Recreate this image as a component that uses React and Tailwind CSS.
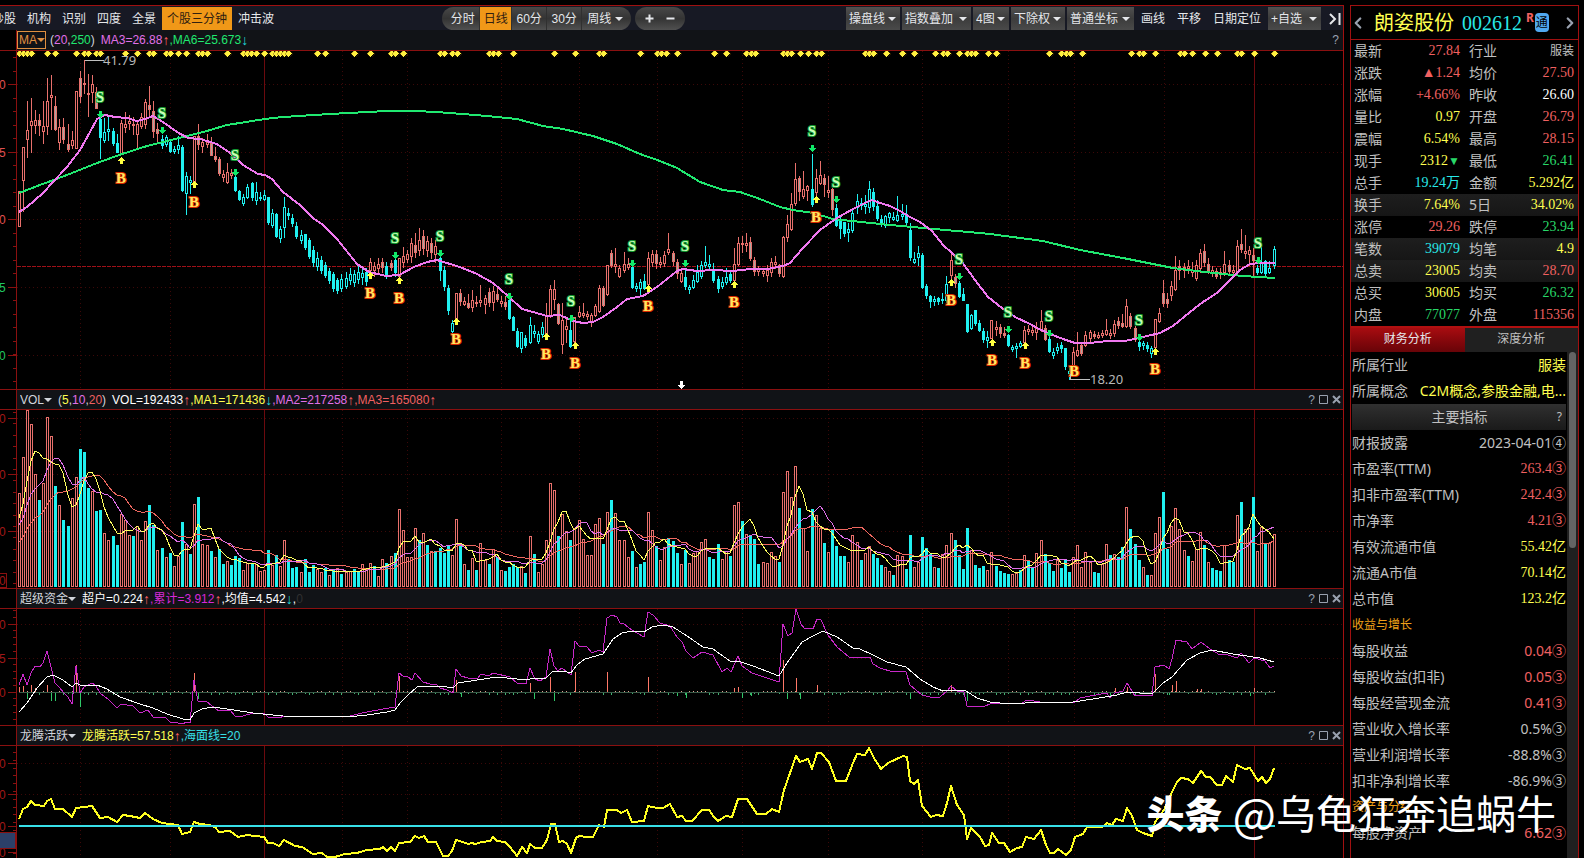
import React, { useState } from "react";
import { ChevronLeft, ChevronRight } from "lucide-react";

/* ---------- chart data ---------- */

// r = up, g = up with grey body, C = down, c = down with hollow body
// high, body top, body bottom, low
const CANDLES = `
r191,191,226,226 r147,147,180,211 r101,130,139,157 r98,121,125,152 r110,120,125,133 g114,120,125,135 r101,126,131,143 r78,101,126,134
r75,95,97,129 g96,106,129,130 r119,127,142,149 g118,127,139,143 g124,144,149,151 r131,140,145,148 r91,91,148,148 g71,78,96,102
r60,83,84,93 r74,93,94,116 r75,84,92,102 g87,92,108,108 C117,119,137,158 c118,132,140,142 c117,129,131,140 C128,131,143,145
C134,143,152,152 r120,123,153,153 r112,124,127,132 r115,121,123,129 r117,124,125,134 r122,124,134,148 r113,117,126,128 r99,102,124,128
g86,105,109,115 g101,111,131,137 g123,129,133,143 C135,139,145,148 c135,137,144,146 C140,142,151,152 c146,149,151,153 c136,145,149,153
C145,147,190,191 c172,176,193,214 c176,180,182,193 r136,136,181,181 g124,136,144,149 r138,142,146,152 r134,142,144,147 g137,143,155,155
g147,156,159,161 g157,159,173,175 r170,174,177,181 r163,172,182,183 r169,173,175,178 C176,177,190,191 C190,191,199,200 c194,197,203,205
c184,187,197,198 C182,183,197,200 c182,192,200,204 c192,197,198,200 c190,195,199,200 C197,197,222,224 c209,213,225,227 C213,214,236,237
c226,229,238,242 c197,207,227,237 C208,213,215,219 C214,218,223,226 C222,226,236,238 c230,235,240,243 C234,234,247,249 C238,240,256,258
C246,250,262,266 c252,258,266,270 C256,260,270,273 C262,265,275,277 C268,271,280,283 C272,274,288,291 C278,280,290,293 c274,279,288,291
c272,278,286,288 c268,274,280,284 c270,274,282,286 c266,272,279,283 c268,273,277,284 C268,272,281,285 r258,262,270,271 r262,266,270,276
r258,264,268,274 g258,262,267,272 C262,266,275,278 g260,263,267,270 C258,260,272,276 r258,258,276,276 r247,256,262,267 r250,254,259,262
r238,243,256,262 g233,245,252,257 r228,240,250,255 g230,236,248,254 r236,241,250,256 g238,243,252,258 r240,246,254,262 C252,258,270,280
C266,270,286,290 C285,288,310,314 c320,323,331,333 r293,293,318,318 g289,293,301,305 r297,301,304,305 g294,303,307,308 r290,300,307,311
r296,302,303,306 r285,300,302,306 r295,298,304,313 g288,292,302,306 r286,291,302,310 g288,294,299,301 r296,301,303,306 g296,302,306,309
C300,300,318,319 C316,317,330,330 C328,331,346,347 c332,332,348,352 C335,338,345,347 c317,325,342,343 c325,331,333,337 c331,334,341,343
c322,327,334,337 r303,316,333,333 r285,289,316,317 r280,289,299,309 g303,304,323,324 r303,320,344,353 r318,326,329,342 C321,330,346,347
r317,317,341,342 r306,312,316,317 r303,313,315,317 r311,314,316,319 r313,315,321,326 r304,306,315,316 r285,288,311,312 g286,288,305,306
r265,265,294,295 g250,253,265,267 r248,264,266,272 r265,268,276,277 r252,264,270,272 r258,264,267,269 C265,267,287,288 c283,286,288,291
c279,282,288,294 C274,281,288,289 r252,258,284,285 r250,254,262,266 g250,254,263,268 r257,262,264,267 r251,255,263,266 r233,249,252,254
g251,253,261,265 g259,262,273,278 r271,273,281,282 C268,277,286,289 c285,287,289,293 c275,280,287,288 c265,272,281,282 c261,265,276,278
c246,262,265,267 c255,264,266,270 C263,269,280,282 C276,279,288,292 c277,282,286,288 c268,277,282,284 C271,274,280,282 r248,264,280,281
r237,243,264,265 r236,243,244,252 r233,243,245,251 g237,242,258,260 g257,260,271,275 r266,269,271,275 r268,271,273,276 r265,270,275,281
r258,262,272,276 r256,262,264,268 g264,265,273,276 r236,237,276,277 r215,224,237,241 r193,204,229,230 r163,179,203,205 g176,178,191,200
r171,189,196,198 r185,186,190,200 C154,189,204,206 r169,178,192,196 r161,175,183,184 g174,178,184,196 r176,190,192,197 g188,189,209,215
C204,208,225,226 C217,220,228,238 C222,222,233,236 c223,229,232,241 c210,213,230,232 c194,201,207,213 c198,203,205,209 c195,204,206,213
c181,189,207,212 C188,192,206,210 C200,206,218,220 C215,219,223,226 c215,216,225,227 c212,213,217,222 c212,217,219,220 c196,215,220,221
c204,214,216,219 C205,214,222,224 C223,230,257,260 c252,259,262,263 c246,253,257,265 C253,255,287,288 C284,286,295,298 C295,296,301,307
c296,299,301,305 C297,298,301,304 c293,299,300,303 c276,284,300,302 r253,260,275,278 g274,277,283,287 C281,283,296,297 C288,294,300,300
C304,304,331,332 c314,315,328,329 C310,310,323,325 C320,323,330,331 C328,331,339,342 c331,337,340,347 r320,320,338,338 r321,327,329,335
g324,327,333,337 g327,333,335,337 C334,335,345,346 c345,347,349,351 c343,346,348,357 c341,343,346,347 r326,330,342,343 r325,329,331,334
r326,330,332,335 r322,328,332,339 r310,321,329,331 g325,328,339,340 C337,339,351,352 c348,352,355,358 c343,347,350,353 C342,345,348,352
C348,348,366,369 c367,371,373,379 r347,352,365,366 r332,350,355,356 g342,345,353,355 r331,335,345,346 r330,332,338,341 g331,334,336,338
r332,335,337,338 r330,333,335,337 r319,330,334,335 r329,333,335,338 r320,324,333,336 g317,321,325,328 g314,323,326,327 r299,306,326,327
g313,316,326,328 g326,328,339,341 C339,342,346,350 c341,343,345,349 C342,345,348,351 c346,348,353,357 r319,319,347,347 r308,313,321,322
g280,293,303,306 g293,299,303,307 r281,286,295,300 r256,270,289,290 g260,266,270,279 r263,267,270,277 r260,266,268,273 r262,270,272,276
r260,265,278,280 r249,253,268,272 g244,251,262,266 g258,264,270,273 r266,270,272,276 g268,271,276,278 r268,272,274,278 r251,264,272,275
g260,265,271,274 r265,270,272,274 r240,246,271,273 g229,244,249,252 r235,251,253,258 r246,250,254,265 g248,255,260,275 C265,268,272,274
c247,263,272,273 C260,261,273,275 c261,268,272,273 c246,249,265,268`
  .trim()
  .split(/\s+/)
  .map((s) => [s[0], ...s.slice(1).split(",").map(Number)]);

// negative = down day
const VOLUMES = [
  283, 391, 532, 490, 340, -260, 312, 511, 454, -302, 247, -200, -182, 268, 329, -413, -404, -296, 287, -227, -230, 163, 142, -152, -125,
  220, 200, 157, -152, 184, 142, 199, -247, -187, 110, -116, 91, -101, 62, 92, -194, 128, -98, 250, -271, 128, 125, -107, 91, -113, -68,
  77, -65, -92, -86, 50, 71, -68, 68, 47, 50, -110, 65, -95, 62, 142, -83, -56, -59, 44, -83, -44, -65, 53, 44, -56, 35, -50, 58, -38,
  44, 47, -53, -44, 68, 56, 71, -62, 32, 83, -71, 92, -101, 235, 172, 89, 89, 178, -140, 163, -125, 107, -107, -116, -101, -125, 97, 205,
  -133, 70, -52, 88, -52, 133, 82, -70, 115, -91, 52, -49, -61, -70, -61, 64, -43, 154, -100, 46, 70, 142, 313, 292, -152, 220, 169,
  -142, 178, 202, 145, 97, 97, 190, 208, -130, 226, -262, 223, 142, 142, 91, -109, 61, -70, -76, 226, 172, -124, 82, 121, -148, -139,
  -103, 70, -112, 73, 103, 109, 136, 145, -91, -85, -130, 85, 109, -94, 247, 256, -199, 160, -157, -145, -70, 76, 73, 106, 94, -76, 286,
  349, 271, 364, -238, 178, 109, -235, 217, 178, -133, 106, -175, -124, -94, -94, 76, 157, 136, -82, 103, 124, -100, -88, -67, 61, 49,
  -37, 97, 94, -55, -157, 61, 76, -151, -118, -100, 61, -58, 100, 127, 163, -142, -97, -55, -178, 112, -67, -58, -64, 52, 106, -64, -49,
  -43, -40, 40, 43, -52, 97, -79, -58, 103, 142, -100, -73, -49, 82, -58, -82, -46, 91, 127, 61, 106, 76, -46, -43, 70, 130, -97, 100,
  -91, -121, 241, -175, -130, -82, 61, -37, 37, 163, 211, -286, -115, 184, 238, 175, 112, -94, 79, 115, 166, -127, 76, -58, -52, -49,
  127, -82, -76, 217, -256, 175, 178, -271, 109, 181, -130, 133, 160,
];

// volumes of the 19 days before the first visible one
const VOL_HISTORY = [85, 85, 85, 85, 85, 85, 85, 85, 85, 85, 162, 162, 162, 162, 162, 189, 189, 189, 189];

const MA_SHORT =
  "19,212 27,207 43,193 53,182 67,167 80,150 90,132 97,119 105,115 115,117 127,118 137,121 145,119 153,116 163,122 177,132 188,138 200,139 217,144 230,153 243,165 258,174 265,175 272,179 283,192 300,205 313,218 323,225 337,239 349,254 357,264 369,272 386,276 399,275 414,267 427,262 437,260 450,264 460,267 477,274 493,283 508,296 522,309 533,312 547,316 560,315 573,321 583,323 593,322 603,317 617,307 627,299 643,296 657,287 677,271 683,269 697,271 713,270 733,271 750,269 767,269 783,266 790,263 803,248 820,230 837,218 853,209 867,202 872,200 877,202 890,206 900,211 910,217 920,222 932,231 943,245 952,253 962,262 975,280 988,297 1002,308 1015,317 1030,324 1037,328 1050,334 1063,339 1075,343 1090,343 1107,341 1125,341 1143,337 1160,333 1173,326 1190,312 1203,302 1217,293 1230,280 1240,270 1250,264 1260,263 1275,263";
const MA_LONG =
  "19,193 40,185 67,175 97,163 122,154 147,146 167,141 187,136 207,131 227,125 265,119 283,117 330,114 387,111 417,111 435,112 450,113 487,116 517,119 543,126 563,129 593,136 617,144 640,154 660,161 677,168 700,182 723,190 740,192 760,199 780,207 793,210 813,213 833,219 890,225 923,228 957,231 990,234 1043,241 1080,250 1123,258 1173,268 1197,271 1223,274 1243,276 1275,278";
const FUND_SUM =
  "19,685 23,674 27,685 31,673 35,666 40,667 43,663 47,651 51,667 55,683 59,687 64,693 68,697 72,704 76,666 80,693 84,687 92,683 96,686 100,693 109,700 117,708 121,704 133,706 140,713 148,710 153,717 165,717 170,722 178,723 182,724 187,722 190,723 194,680 198,701 207,702 219,711 230,710 235,716 243,716 253,713 265,714 268,717 278,718 285,716 327,717 350,716 362,713 383,709 395,707 399,673 403,676 408,677 412,680 415,673 423,682 430,684 437,685 440,688 447,690 453,693 456,669 461,676 468,678 477,679 481,674 489,676 493,673 510,677 517,683 526,684 530,668 535,679 540,681 546,677 550,649 554,666 558,671 562,668 571,675 575,641 579,646 587,647 592,653 599,650 603,652 607,618 612,615 617,617 620,623 624,624 632,630 644,637 648,612 653,615 660,623 670,626 677,637 682,642 686,651 693,658 702,652 713,655 722,672 727,668 731,672 738,656 742,666 752,673 770,679 779,682 783,624 788,636 792,633 796,609 801,624 804,628 813,629 817,619 821,620 828,635 837,647 849,657 870,657 873,664 880,668 893,672 899,671 906,672 910,685 922,695 930,697 940,697 947,691 951,686 957,691 964,692 967,706 983,707 992,703 1022,703 1027,700 1047,703 1060,702 1075,702 1080,698 1090,696 1107,693 1110,698 1115,693 1123,691 1127,683 1135,696 1143,695 1152,696 1155,667 1164,665 1169,669 1172,659 1176,640 1187,642 1192,649 1201,642 1210,649 1220,655 1225,654 1237,658 1241,653 1249,663 1254,658 1265,661 1270,668 1274,666";
const FUND_AVG =
  "19,712 27,703 37,688 47,677 53,675 63,680 72,687 76,683 82,686 97,685 107,689 120,697 140,704 153,708 167,714 183,719 190,720 194,713 202,709 213,707 227,709 253,713 283,716 347,717 367,715 387,712 395,710 400,703 408,695 417,687 427,686 440,686 453,688 458,683 477,680 497,677 517,679 527,680 533,678 546,678 552,672 563,671 571,673 577,665 585,659 603,654 613,639 622,633 632,631 644,632 652,627 663,625 673,627 687,636 703,647 713,649 730,661 738,661 753,666 779,676 787,663 802,642 813,636 823,631 837,637 853,648 860,649 873,655 887,662 906,667 920,679 933,687 943,691 957,690 966,691 977,698 990,702 1010,704 1040,702 1073,702 1093,699 1117,695 1127,692 1152,694 1163,683 1172,677 1187,660 1200,653 1212,650 1233,654 1260,658 1274,662";
const ACTIVE =
  "19,819 23,809 27,807 31,801 35,805 44,806 47,801 51,799 55,809 63,809 72,817 76,808 84,807 92,806 100,818 108,817 117,822 123,815 130,816 140,818 145,813 153,819 162,823 170,824 178,825 182,834 190,832 194,822 200,824 209,825 215,827 219,832 230,831 238,837 247,835 264,837 268,843 273,843 279,846 284,840 295,846 302,847 313,854 322,853 327,857 335,857 345,854 357,853 367,850 380,849 383,847 387,851 391,847 395,851 399,843 410,842 415,836 419,838 424,836 428,842 436,842 443,856 448,856 452,851 456,840 463,842 468,844 472,843 475,844 482,842 490,841 493,837 497,841 505,842 510,847 517,856 522,847 527,853 530,844 535,848 542,848 547,840 551,824 555,824 559,842 563,841 567,844 571,853 576,838 579,836 587,837 593,837 599,825 604,827 607,810 617,810 621,813 627,810 632,822 644,821 648,806 657,808 663,808 670,804 677,817 682,816 686,821 692,821 702,810 709,810 714,817 718,821 726,816 732,817 738,799 747,799 757,814 766,814 772,809 779,812 784,790 796,756 800,762 808,759 812,769 817,753 821,753 829,762 836,781 846,781 853,763 857,754 865,755 869,748 874,758 881,769 888,763 903,756 907,757 910,781 914,784 918,780 922,806 931,817 936,815 943,816 947,803 951,786 957,805 964,815 967,839 971,828 980,837 985,846 989,845 992,833 999,843 1004,843 1010,852 1017,848 1022,847 1026,837 1034,839 1041,830 1046,845 1050,853 1054,853 1058,849 1066,855 1071,850 1075,837 1083,834 1087,827 1102,827 1107,823 1112,825 1116,819 1123,821 1127,808 1132,816 1137,830 1143,833 1152,836 1155,822 1164,810 1172,792 1177,782 1181,778 1188,779 1193,783 1201,771 1206,777 1210,777 1217,785 1222,785 1226,776 1233,782 1237,765 1245,769 1250,768 1258,781 1262,777 1266,783 1270,779 1274,768";

const EVENTS = [
  19, 23, 27, 31, 47, 55, 76, 84, 88, 96, 100, 125, 137, 149, 153, 166, 170, 178, 186, 198, 202, 207, 227, 243, 247, 251, 256, 264, 272,
  276, 280, 284, 288, 317, 325, 354, 370, 391, 395, 403, 440, 444, 452, 457, 489, 493, 498, 513, 554, 575, 599, 603, 640, 657, 661, 666,
  677, 714, 726, 746, 751, 755, 783, 787, 791, 800, 808, 816, 821, 865, 869, 873, 886, 902, 914, 935, 943, 947, 959, 967, 971, 975, 988,
  996, 1049, 1061, 1066, 1070, 1082, 1131, 1139, 1143, 1155, 1180, 1184, 1192, 1205, 1217, 1237, 1241, 1254, 1274,
];

const SELLS = [
  [100, 97], [162, 113], [235, 155], [395, 238], [440, 236], [509, 279], [571, 301], [632, 246],
  [685, 246], [812, 131], [836, 182], [959, 259], [1008, 312], [1049, 316], [1139, 320], [1258, 243],
];
const BUYS = [
  [121, 178], [194, 202], [370, 293], [399, 298], [456, 339], [546, 354], [575, 363], [648, 306],
  [734, 302], [816, 217], [951, 300], [992, 360], [1025, 363], [1074, 371], [1155, 369],
];

const FUND_IN = [
  [19, 5], [23, 6], [31, 7], [35, 4], [47, 7], [76, 27], [194, 19], [399, 16], [456, 12], [530, 9], [550, 15], [575, 20], [607, 20],
  [648, 15], [734, 4], [738, 5], [783, 32], [796, 14], [817, 7], [951, 7], [1115, 4], [1127, 5], [1155, 18], [1172, 7], [1176, 11],
  [1197, 3], [1201, 3], [1254, 4],
];
const FUND_OUT = [
  [27, 6], [51, 8], [55, 8], [72, 4], [80, 14], [198, 6], [461, 4], [534, 6], [554, 8], [677, 3], [686, 5], [742, 5], [751, 3],
  [787, 6], [800, 6], [910, 6], [922, 3], [967, 8], [1110, 4], [1169, 2], [1250, 3],
];

const MONTHS = [80, 170, 342, 407, 501, 579, 657, 742, 828, 922, 1008, 1074, 1164];
const YEARS = [264, 1254];

const barX = (i) => 19 + Math.floor(i * 4.088);

const average = (n) => {
  const all = [...VOL_HISTORY, ...VOLUMES.map(Math.abs)];
  return VOLUMES.map((_, i) => {
    const end = i + VOL_HISTORY.length + 1;
    const sum = all.slice(end - n, end).reduce((a, b) => a + b, 0);
    return `${barX(i)},${Math.round(587 - sum / n / 3)}`;
  }).join(" ");
};

/* ---------- small parts ---------- */

const Caret = ({ className = "" }) => (
  <svg viewBox="0 0 8 4" className={`pointer-events-none h-1 w-2 ${className}`}>
    <path d="M0 0h8L4 4z" fill="currentColor" />
  </svg>
);

const Dropdown = ({ label, className = "", caret = "right-1" }) => (
  <label className={`relative flex items-center ${className}`}>
    <select aria-label={label} className="h-full w-full appearance-none bg-transparent outline-none">
      <option>{label}</option>
    </select>
    <Caret className={`absolute ${caret}`} />
  </label>
);

const WindowButtons = () => (
  <div className="ml-auto flex items-center gap-1 pr-0.5 text-xs text-gray-400">
    <button>?</button>
    <button aria-label="最大化">
      <svg viewBox="0 0 9 9" className="size-[9px]">
        <path d="M.5 .5h8v8h-8z" fill="none" stroke="currentColor" />
      </svg>
    </button>
    <button aria-label="关闭">
      <svg viewBox="0 0 9 9" className="size-[9px]">
        <path d="M1 1l7 7M8 1l-7 7" stroke="currentColor" strokeWidth="2" />
      </svg>
    </button>
  </div>
);

const Up = () => <span className="text-sm leading-none text-[#ff6060]">↑</span>;
const Down = () => <span className="text-sm leading-none text-[#20d8d8]">↓</span>;

const TitleBar = ({ name, width, children }) => (
  <div className="flex h-[21px] shrink-0 border-y border-[#8a1010]">
    <div className="w-[17px] shrink-0 border-r border-[#8a1010]" />
    <div className="flex flex-1 items-center bg-[#111317] pl-[3px] text-xs whitespace-nowrap">
      <Dropdown label={name} className={`mr-1.5 h-full text-gray-300 ${width}`} caret="right-0" />
      {children}
      <WindowButtons />
    </div>
  </div>
);

const Axis = ({ top, height, labels, step, from, children }) => {
  const ticks = [];
  for (let y = from; y < top + height; y += step) ticks.push(Math.round(y));
  return (
    <svg
      viewBox={`0 ${top} 16 ${height}`}
      preserveAspectRatio="none"
      className="h-full w-[17px] shrink-0 border-r border-[#8a1010]"
      shapeRendering="crispEdges"
    >
      {ticks.map((y) => (
        <rect key={y} x="13" y={y} width="3" height="1" fill="#8a1010" />
      ))}
      {labels.map(([text, y, color]) => (
        <g key={y}>
          <rect x="8" y={y} width="8" height="1" fill="#8a1010" />
          <text x="-1" y={y + 5} fontSize="12" fill={color}>
            {text}
          </text>
        </g>
      ))}
      {children}
    </svg>
  );
};

const Plot = ({ top, height, rows, children, label }) => (
  <svg
    viewBox={`17 ${top} 1326 ${height}`}
    preserveAspectRatio="none"
    className="h-full min-w-0 flex-1"
    shapeRendering="crispEdges"
    role="img"
    aria-label={label}
  >
    <g stroke="#3c0808" strokeDasharray="1 3">
      {rows.map((y) => (
        <line key={y} x1="17" x2="1343" y1={y + 0.5} y2={y + 0.5} />
      ))}
      {MONTHS.map((x) => (
        <line key={x} x1={x + 0.5} x2={x + 0.5} y1={top} y2={top + height} />
      ))}
    </g>
    {YEARS.map((x) => (
      <rect key={x} x={x} y={top} width="1" height={height} fill="#6c0a0e" />
    ))}
    {children}
  </svg>
);

const Line = ({ points, color, width = 1 }) => (
  <polyline points={points} fill="none" stroke={color} strokeWidth={width} strokeLinejoin="round" />
);

/* ---------- charts ---------- */

const PriceChart = () => (
  <div className="flex min-h-0 flex-[338]">
    <Axis
      top={51}
      height={338}
      from={57}
      step={13.5}
      labels={[
        ["0", 84, "#e05050"],
        ["5", 152, "#e05050"],
        ["0", 219, "#e05050"],
        ["5", 287, "#20c860"],
        ["0", 355, "#20c860"],
      ]}
    />
    <Plot top={51} height={338} rows={[84, 152, 219, 287, 355]} label="日线">
      <line x1="17" x2="1343" y1="266.5" y2="266.5" stroke="#a01018" strokeDasharray="4 1" />
      {CANDLES.map(([type, high, top, bottom, low], i) => {
        const x = barX(i);
        const color = type === "r" || type === "g" ? "#e8706c" : "#20f0f0";
        const inner = type === "g" ? "#a8a8a0" : "#000";
        return (
          <g key={i}>
            <rect x={x} y={high} width="1" height={low - high + 1} fill={color} />
            <rect x={x - 1} y={top} width="3" height={bottom - top + 1} fill={color} />
            {type !== "C" && bottom - top > 1 && (
              <rect x={x} y={top + 1} width="1" height={bottom - top - 1} fill={inner} />
            )}
          </g>
        );
      })}
      <Line points={MA_LONG} color="#20e870" width={2} />
      <Line points={MA_SHORT} color="#f078f0" width={2} />
      {EVENTS.map((x) => (
        <path key={x} d={`M${x - 3} 53.5l3.5-3.5 3.5 3.5-3.5 3.5z`} fill="#fff040" stroke="#604000" strokeWidth=".4" />
      ))}
      <g fontFamily="Liberation Serif" fontSize="15" fontWeight="bold" textAnchor="middle" paintOrder="stroke" strokeWidth="2">
        {SELLS.map(([x, y]) => (
          <g key={x}>
            <text x={x} y={y + 5} fill="#c8ffb8" stroke="#109830">
              S
            </text>
            <path d={`M${x - 1} ${y + 14}h3v3h2l-3.500 4-3.500-4h2z`} fill="#10e868" />
          </g>
        ))}
        {BUYS.map(([x, y]) => (
          <g key={x}>
            {x !== 1074 && <path d={`M${x - 1} ${y - 14}h3v-3h2l-3.500-4-3.500 4h2z`} fill="#ffff40" />}
            <text x={x} y={y + 5} fill="#ffe860" stroke="#d82800">
              B
            </text>
          </g>
        ))}
      </g>
      <path d="M680 381h3v4h2l-3.500 4-3.500-4h2z" fill="#fff" />
      <g fill="none" stroke="#c0c0c0">
        <path d="M84.5 60.500H104" />
        <path d="M1070.500 374v5.500H1090" />
      </g>
      <g fill="#b8b8b8" fontSize="13" fontFamily="Noto Sans">
        <text x="103" y="65">
          41.79
        </text>
        <text x="1090" y="384">
          18.20
        </text>
      </g>
    </Plot>
  </div>
);

const VolumeChart = () => (
  <div className="flex min-h-0 flex-[178]">
    <Axis
      top={410}
      height={178}
      from={412}
      step={11.4}
      labels={[
        ["0", 418, "#a01818"],
        ["0", 474, "#a01818"],
        ["0", 531, "#a01818"],
      ]}
    >
      <path d="M-1 573.500h7.500v14h-8" fill="none" stroke="#8a1010" />
      <text x="-1" y="585" fontSize="12" fill="#a01818">
        0
      </text>
    </Axis>
    <Plot top={410} height={178} rows={[418, 474, 531]} label="VOL">
      {VOLUMES.map((v, i) => {
        const h = Math.round(Math.abs(v) / 3);
        const x = barX(i);
        return (
          <g key={i}>
            <rect x={x - 1} y={587 - h} width="3" height={h} fill={v < 0 ? "#20f0f0" : "#e8706c"} />
            {v > 0 && <rect x={x} y={588 - h} width="1" height={h - 2} fill="#000" />}
          </g>
        );
      })}
      <Line points={average(20)} color="#f06860" />
      <Line points={average(10)} color="#e070e8" />
      <Line points={average(5)} color="#ffff60" />
    </Plot>
  </div>
);

const FundChart = () => (
  <div className="flex min-h-0 flex-[116]">
    <Axis
      top={609}
      height={116}
      from={610}
      step={6.8}
      labels={[
        ["0", 624, "#a01818"],
        ["5", 658, "#a01818"],
        ["0", 692, "#a01818"],
      ]}
    />
    <Plot top={609} height={116} rows={[624, 658]} label="超级资金">
      <rect x="19" y="692" width="1256" height="1" fill="#3a5a48" />
      {VOLUMES.map((v, i) =>
        v < 0 ? (
          <rect key={i} x={barX(i)} y="693" width="1" height={1 + (i % 2)} fill="#40b070" />
        ) : (
          <rect key={i} x={barX(i)} y="691" width="1" height="1" fill="#e0a090" />
        )
      )}
      {FUND_IN.map(([x, h]) => (
        <rect key={x} x={x} y={692 - h} width="1" height={h} fill="#ff7868" />
      ))}
      {FUND_OUT.map(([x, h]) => (
        <rect key={x} x={x} y="693" width="1" height={h} fill="#30c868" />
      ))}
      <Line points={FUND_SUM} color="#c828c8" />
      <Line points={FUND_AVG} color="#fff" />
    </Plot>
  </div>
);

const ActiveChart = () => (
  <div className="flex min-h-0 flex-[112]">
    <Axis
      top={746}
      height={112}
      from={752}
      step={7.8}
      labels={[
        ["0", 763, "#a01818"],
        ["0", 794, "#a01818"],
        ["0", 826, "#a01818"],
        ["0", 852, "#a01818"],
      ]}
    >
      <rect x="-1" y="832" width="16" height="16" fill="#2c4068" stroke="#8a1010" />
    </Axis>
    <Plot top={746} height={112} rows={[763, 794]} label="龙腾活跃">
      <Line points={ACTIVE} color="#ffff20" width={2} />
      <rect x="19" y="825" width="1256" height="2" fill="#38e0e8" />
    </Plot>
  </div>
);

/* ---------- toolbar ---------- */

const LINKS = ["炒股", "机构", "识别", "四度", "全景", "个股三分钟", "冲击波"];
const BOX = "h-[23px] bg-gradient-to-b from-[#505050] via-[#3c3c3c] to-[#4a4a4a] pl-[3px]";

const Toolbar = () => {
  const [period, setPeriod] = useState("日线");
  return (
    <div className="grid h-6 shrink-0 grid-cols-[33%_1fr_auto] items-end bg-[#171924] text-xs whitespace-nowrap text-gray-200">
      <nav className="flex overflow-hidden">
        <div className="-ml-[13px] flex gap-px">
          {LINKS.map((name) => (
            <button
              key={name}
              className={`h-[23px] px-[5px] ${name === "个股三分钟" ? "bg-[#f09818] text-[#302010]" : ""}`}
            >
              {name}
            </button>
          ))}
        </div>
      </nav>

      <div className="flex gap-1">
        <div className="-ml-px flex h-[23px] w-[189px] overflow-hidden rounded-full bg-gradient-to-b from-[#484848] via-[#343434] to-[#505050]">
          {["分时", "日线", "60分", "30分"].map((name) => (
            <button
              key={name}
              onClick={() => setPeriod(name)}
              className={`border-r border-[#303030] ${name === "分时" ? "w-[38px] pl-1" : name === "日线" ? "w-8" : "w-[35px]"} ${
                period === name ? "bg-[#f09818] text-[#302010]" : ""
              }`}
            >
              {name}
            </button>
          ))}
          <Dropdown label="周线" className="flex-1 pl-[5px]" caret="right-2" />
        </div>
        <div className="flex h-[23px] w-[50px] items-center justify-center gap-3 rounded-full bg-gradient-to-b from-[#484848] via-[#343434] to-[#505050]">
          <button aria-label="放大">
            <svg viewBox="0 0 9 9" className="size-[9px]">
              <path d="M.5 4.500h8M4.500 .5v8" stroke="currentColor" strokeWidth="2" />
            </svg>
          </button>
          <button aria-label="缩小">
            <svg viewBox="0 0 9 9" className="size-[9px]">
              <path d="M.5 4.500h8" stroke="currentColor" strokeWidth="2" />
            </svg>
          </button>
        </div>
      </div>

      <div className="flex items-center gap-0.5 pr-0.5">
        <Dropdown label="操盘线" className={`w-[54px] ${BOX}`} />
        <Dropdown label="指数叠加" className={`w-[69px] ${BOX}`} />
        <Dropdown label="4图" className={`w-9 ${BOX}`} />
        <Dropdown label="下除权" className={`w-[54px] ${BOX}`} />
        <Dropdown label="普通坐标" className={`w-[67px] ${BOX}`} />
        <button className="px-[5px]">画线</button>
        <button className="px-[5px]">平移</button>
        <button className="px-[5px]">日期定位</button>
        <Dropdown label="+自选" className={`w-[53px] ${BOX}`} />
        <button aria-label="收起" className="pl-1.5">
          <svg viewBox="0 0 12 12" className="size-3">
            <path d="M1 1l5 5-5 5M10.500 0v12" fill="none" stroke="currentColor" strokeWidth="2" />
          </svg>
        </button>
      </div>
    </div>
  );
};

/* ---------- quote panel ---------- */

const RED = "text-[#f06060]";
const GREEN = "text-[#28d868]";
const YELLOW = "text-[#ffff50]";
const CYAN = "text-[#28e8e8]";
const WHITE = "text-white";
const GRAY = "text-[#c0c0c0]";

const QUOTES = [
  ["最新", "27.84", RED, "行业", "服装", GRAY],
  ["涨跌", "▲1.24", RED, "均价", "27.50", RED],
  ["涨幅", "+4.66%", RED, "昨收", "26.60", WHITE],
  ["量比", "0.97", YELLOW, "开盘", "26.79", RED],
  ["震幅", "6.54%", YELLOW, "最高", "28.15", RED],
  ["现手", "2312", YELLOW, "最低", "26.41", GREEN],
  ["总手", "19.24万", CYAN, "金额", "5.292亿", YELLOW],
  ["换手", "7.64%", YELLOW, "5日", "34.02%", YELLOW],
  ["涨停", "29.26", RED, "跌停", "23.94", GREEN],
  ["笔数", "39079", CYAN, "均笔", "4.9", YELLOW],
  ["总卖", "23005", YELLOW, "均卖", "28.70", RED],
  ["总买", "30605", YELLOW, "均买", "26.32", GREEN],
  ["内盘", "77077", GREEN, "外盘", "115356", RED],
];
const SHADED = ["换手", "笔数", "总卖"];

const METRICS = [
  ["财报披露", "2023-04-01", "④", GRAY, false],
  ["市盈率(TTM)", "263.4", "③", RED, true],
  ["扣非市盈率(TTM)", "242.4", "③", RED, true],
  ["市净率", "4.21", "③", RED, true],
  ["有效流通市值", "55.42亿", "", YELLOW, true],
  ["流通A市值", "70.14亿", "", YELLOW, true],
  ["总市值", "123.2亿", "", YELLOW, true],
  ["收益与增长"],
  ["每股收益", "0.04", "③", RED, false],
  ["每股收益(扣非)", "0.05", "③", RED, false],
  ["每股经营现金流", "0.41", "③", RED, false],
  ["营业收入增长率", "0.5%", "③", GRAY, false],
  ["营业利润增长率", "-88.8%", "③", GRAY, false],
  ["扣非净利增长率", "-86.9%", "③", GRAY, false],
  ["资产与分红"],
  ["每股净资产", "6.62", "③", RED, false],
];

const SERIF = "font-['Liberation_Serif','Noto_Sans_CJK_SC',serif]";
const SANS = "font-['Noto_Sans','Noto_Sans_CJK_SC',sans-serif]";

const QuotePanel = () => {
  const [tab, setTab] = useState("财务分析");
  return (
    <aside className={`flex w-[229px] shrink-0 flex-col border-x border-t border-[#a01010] text-sm whitespace-nowrap text-[#c0c0c0] ${SANS}`}>
      <header className="flex h-[33px] items-center">
        <button aria-label="上一只" className="-ml-0.5 text-gray-400">
          <ChevronLeft size={18} strokeWidth={3} />
        </button>
        <h1 className="ml-[7px] text-xl leading-none text-[#ffff50]">朗姿股份</h1>
        <span className={`ml-2 text-xl leading-none ${CYAN} ${SERIF}`}>002612</span>
        <span className="ml-1 self-start pt-1.5 text-xs leading-none font-bold text-[#f06060]">R</span>
        <span className="ml-px flex h-[19px] w-3.5 items-center justify-center rounded-sm bg-[#50a8f0] text-xs leading-none text-black">
          通
        </span>
        <button aria-label="下一只" className="-mr-px ml-auto text-gray-400">
          <ChevronRight size={18} strokeWidth={3} />
        </button>
      </header>

      <table className="w-full table-fixed border-t border-[#a01010]">
        <colgroup>
          <col className="w-9" />
          <col />
          <col className="w-[47px]" />
          <col className="w-[71px]" />
        </colgroup>
        <tbody>
          {QUOTES.map(([a, av, ac, b, bv, bc]) => (
            <tr key={a} className={`h-[22px] leading-5 ${SHADED.includes(a) ? "bg-gradient-to-b from-[#1e1e1e] to-[#161616]" : ""}`}>
              <td className="p-0 pl-[3px]">{a}</td>
              <td className={`p-0 text-right ${ac} ${SERIF}`}>
                {av}
                {a === "现手" && <span className={`text-xs leading-none ${GREEN}`}>▼</span>}
              </td>
              <td className="p-0 pl-[9px]">{b}</td>
              <td className={`p-0 pr-1 text-right ${bc} ${bv === "服装" ? "text-xs" : ""} ${SERIF}`}>{bv}</td>
            </tr>
          ))}
        </tbody>
      </table>

      <div className="flex h-[26px] shrink-0 border-t-2 border-[#b01010] text-xs">
        {["财务分析", "深度分析"].map((name) => (
          <button
            key={name}
            onClick={() => setTab(name)}
            className={`flex-1 pb-0.5 ${tab === name ? "bg-gradient-to-b from-[#a80c10] to-[#680408] text-gray-200" : "bg-[#202020]"}`}
          >
            {name}
          </button>
        ))}
      </div>

      <div className="flex min-h-0 flex-1 overflow-hidden">
        <div className="min-w-0 flex-1 pr-px pl-px">
          <dl className="leading-[26px]">
            <div className="flex justify-between">
              <dt>所属行业</dt>
              <dd className={YELLOW}>服装</dd>
            </div>
            <div className="flex justify-between">
              <dt>所属概念</dt>
              <dd className={YELLOW}>C2M概念,参股金融,电...</dd>
            </div>
          </dl>
          <h2 className="flex h-[26px] items-center bg-gradient-to-b from-[#303030] to-[#1a1a1a]">
            <span className="flex-1 pl-2.5 text-center">主要指标</span>
            <button className="pr-1 text-xs">?</button>
          </h2>
          <table className="w-full">
            <tbody>
              {METRICS.map(([name, value, mark, color, serif]) => (
                <tr key={name} className="h-[26px] leading-5">
                  {value ? (
                    <>
                      <td className="p-0">{name}</td>
                      <td className={`p-0 text-right ${color}`}>
                        <span className={serif ? SERIF : ""}>{value}</span>
                        {mark}
                      </td>
                    </>
                  ) : (
                    <td colSpan={2} className="p-0 text-xs text-[#f0a018]">
                      {name}
                    </td>
                  )}
                </tr>
              ))}
            </tbody>
          </table>
        </div>
        <div className="w-[11px] bg-[#202020] px-0.5">
          <div className="h-[196px] rounded-full bg-[#646464]" />
        </div>
      </div>
    </aside>
  );
};

/* ---------- page ---------- */

export default function App() {
  return (
    <div className="relative flex h-screen overflow-hidden bg-black pt-[5px] pr-[5px] font-['Liberation_Sans','Noto_Sans_CJK_SC',sans-serif]">
      <main className="mr-1.5 flex min-w-0 flex-1 flex-col border-t border-r border-[#a01010]">
        <Toolbar />
        <div className="flex h-[21px] shrink-0 border-b border-[#8a1010] text-xs whitespace-nowrap">
          <div className="w-[17px] shrink-0 border-r border-[#8a1010]" />
          <div className="flex flex-1 items-center bg-[#111317]">
            <Dropdown label="MA" className="mr-1 h-[18px] w-[29px] border border-[#e09040] pl-px text-[#e09040]" caret="right-0" />
            <span className="text-gray-300">
              (<span className="text-[#e070e8]">20</span>,<span className="text-[#20e870]">250</span>)
            </span>
            <span className="ml-1.5 text-[#e070e8]">MA3=26.88</span>
            <Up />
            <span className="text-[#20e870]">,MA6=25.673</span>
            <Down />
            <button className="mr-1 ml-auto text-gray-400">?</button>
          </div>
        </div>
        <PriceChart />
        <TitleBar name="VOL" width="w-8">
          <span className="text-gray-300">
            (<span className="text-[#ffff50]">5</span>,<span className="text-[#e070e8]">10</span>,<span className="text-[#f06060]">20</span>)
          </span>
          <span className="ml-1.5 text-white">VOL=192433</span>
          <Up />
          <span className="text-[#ffff50]">,MA1=171436</span>
          <Down />
          <span className="text-[#e070e8]">,MA2=217258</span>
          <Up />
          <span className="text-[#f06060]">,MA3=165080</span>
          <Up />
        </TitleBar>
        <VolumeChart />
        <TitleBar name="超级资金" width="w-14">
          <span className="text-white">超户=0.224</span>
          <Up />
          <span className="text-[#d828d8]">,累计=3.912</span>
          <Up />
          <span className="text-white">,均值=4.542</span>
          <Down />
          <span className="text-white">,</span>
          <span className="text-[#303030]">0</span>
        </TitleBar>
        <FundChart />
        <TitleBar name="龙腾活跃" width="w-14">
          <span className="text-[#ffff50]">龙腾活跃=57.518</span>
          <Up />
          <span className="text-[#38e0e8]">,海面线=20</span>
        </TitleBar>
        <ActiveChart />
      </main>

      <QuotePanel />

      <div className="pointer-events-none absolute right-7 bottom-4 flex items-center font-['Noto_Sans_CJK_SC',sans-serif] text-[40px] leading-[60px] whitespace-nowrap text-white">
        <span className="mr-2.5 text-[38px] font-black">头条</span>
        <span className="text-[46px]">@</span>
        <span>乌龟狂奔追蜗牛</span>
      </div>
    </div>
  );
}
